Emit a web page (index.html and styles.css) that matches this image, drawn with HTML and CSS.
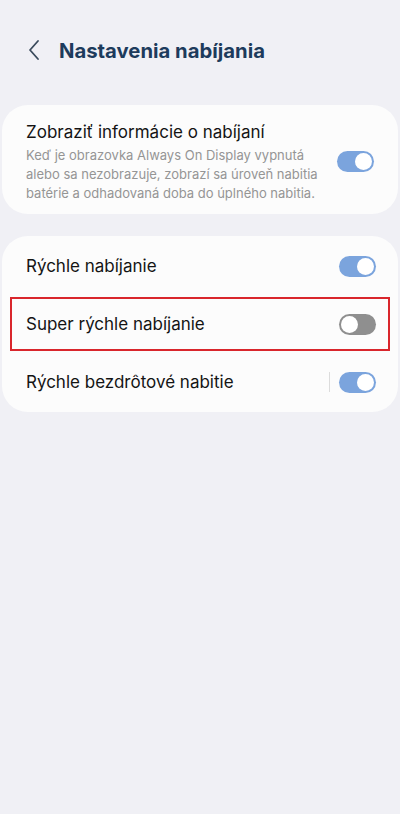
FILE: index.html
```html
<!DOCTYPE html>
<html lang="sk">
<head>
<meta charset="utf-8">
<link rel="stylesheet" href="styles.css">
</head>
<body>
<div class="screen">
  <header class="header">
    <svg class="back" width="14" height="22" viewBox="0 0 14 22"><path d="M11 2 L3 11 L11 20" fill="none" stroke="#3a4a5c" stroke-width="1.8" stroke-linecap="round" stroke-linejoin="round"/></svg>
    <h1 class="title">Nastavenia nabíjania</h1>
  </header>

  <section class="card card-info">
    <div class="row-text">
      <div class="label">Zobraziť informácie o nabíjaní</div>
      <div class="desc">Keď je obrazovka Always On Display vypnutá alebo sa nezobrazuje, zobrazí sa úroveň nabitia batérie a odhadovaná doba do úplného nabitia.</div>
    </div>
    <span class="toggle on"><span class="knob"></span></span>
  </section>

  <section class="card card-list">
    <div class="row">
      <div class="label">Rýchle nabíjanie</div>
      <span class="toggle on"><span class="knob"></span></span>
    </div>
    <div class="row highlighted">
      <div class="label">Super rýchle nabíjanie</div>
      <span class="toggle off"><span class="knob"></span></span>
    </div>
    <div class="row">
      <div class="label">Rýchle bezdrôtové nabitie</div>
      <span class="sep"></span>
      <span class="toggle on"><span class="knob"></span></span>
    </div>
  </section>
</div>
</body>
</html>
```
FILE: styles.css
```css
html, body {
  margin: 0;
  padding: 0;
  background: #f0f0f5;
}
body {
  font-family: Inter, Roboto, "Noto Sans", sans-serif;
  width: 400px;
  height: 814px;
  overflow: hidden;
}
.screen {
  padding: 0 2px;
}
.header {
  display: flex;
  align-items: center;
  height: 100px;
  padding-left: 25px;
  box-sizing: border-box;
}
.back {
  display: block;
}
.title {
  margin: 0 0 0 18px;
  font-size: 20.3px;
  font-weight: 700;
  color: #1d3b5c;
}
.card {
  background: #fcfcfc;
  border-radius: 26px;
}
.card-info {
  margin-top: 5px;
  display: flex;
  align-items: center;
  padding: 17px 24px 13px 24px;
  height: 109px;
  box-sizing: border-box;
}
.row-text {
  flex: 1;
}
.label {
  font-size: 17px;
  color: #141414;
  line-height: 22px;
}
.card-info .label {
  margin-bottom: 3px;
}
.desc {
  font-size: 13px;
  line-height: 19px;
  color: #959595;
  padding-right: 4px;
}
.card-list {
  margin-top: 22px;
  height: 176px;
  box-sizing: border-box;
  padding-top: 1px;
}
.row {
  display: flex;
  align-items: center;
  height: 58px;
  margin: 0 8px;
  padding-left: 16px;
  padding-right: 14px;
}
.row .label {
  flex: 1;
}
.highlighted {
  outline: 2px solid #d9262c;
  outline-offset: -2px;
  height: 54px;
  margin-top: 2px;
  margin-bottom: 2px;
}
.sep {
  width: 1px;
  height: 20px;
  background: #dcdcdc;
  margin-right: 9px;
}
.toggle {
  position: relative;
  display: inline-block;
  width: 37px;
  height: 21px;
  border-radius: 11px;
  flex: none;
}
.toggle.on {
  background: #7ba4dd;
}
.toggle.off {
  background: #8f8f8f;
}
.knob {
  position: absolute;
  top: 2px;
  width: 17px;
  height: 17px;
  border-radius: 50%;
  background: #fff;
}
.toggle.on .knob {
  right: 2px;
}
.toggle.off .knob {
  left: 2px;
}
.card-info .toggle {
  margin-left: 6px;
}
```
